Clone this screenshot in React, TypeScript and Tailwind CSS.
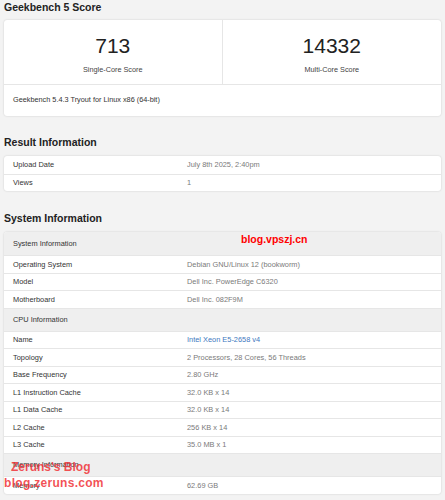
import React from "react";

type Row = { label: string; value: string; link?: boolean };
type Block = { header?: string; rows: Row[] };

const resultRows: Row[] = [
  { label: "Upload Date", value: "July 8th 2025, 2:40pm" },
  { label: "Views", value: "1" },
];

const systemBlocks: Block[] = [
  {
    header: "System Information",
    rows: [
      { label: "Operating System", value: "Debian GNU/Linux 12 (bookworm)" },
      { label: "Model", value: "Dell Inc. PowerEdge C6320" },
      { label: "Motherboard", value: "Dell Inc. 082F9M" },
    ],
  },
  {
    header: "CPU Information",
    rows: [
      { label: "Name", value: "Intel Xeon E5-2658 v4", link: true },
      { label: "Topology", value: "2 Processors, 28 Cores, 56 Threads" },
      { label: "Base Frequency", value: "2.80 GHz" },
      { label: "L1 Instruction Cache", value: "32.0 KB x 14" },
      { label: "L1 Data Cache", value: "32.0 KB x 14" },
      { label: "L2 Cache", value: "256 KB x 14" },
      { label: "L3 Cache", value: "35.0 MB x 1" },
    ],
  },
  {
    header: "Memory Information",
    rows: [{ label: "Memory", value: "62.69 GB" }],
  },
];

function SectionTitle({ children, className }: { children: string; className?: string }) {
  return (
    <h2 className={`h-[14px] text-[10.5px] font-bold leading-[14px] text-[#222] ${className ?? ""}`}>
      {children}
    </h2>
  );
}

function InfoRow({ row, first }: { row: Row; first: boolean }) {
  return (
    <div
      className={`grid h-[17.5px] grid-cols-[174px_1fr] items-center px-[9px] text-[7.4px] ${
        first ? "" : "border-t border-[#e6e6e6]"
      }`}
    >
      <span className="text-[#333]">{row.label}</span>
      <span className={row.link ? "text-[#3d78c0]" : "text-[#7a7a7a]"}>{row.value}</span>
    </div>
  );
}

function InfoTable({ blocks }: { blocks: Block[] }) {
  return (
    <div className="overflow-hidden rounded-[3px] bg-white shadow-[0_0_2px_rgba(0,0,0,0.18)]">
      {blocks.map((block, bi) => (
        <div key={bi}>
          {block.header && (
            <div
              className={`flex h-[23px] items-center bg-[#efefef] px-[9px] text-[7.4px] text-[#333] ${
                bi === 0 ? "" : "border-t border-[#e6e6e6]"
              }`}
            >
              {block.header}
            </div>
          )}
          {block.rows.map((row, ri) => (
            <InfoRow key={row.label} row={row} first={!block.header && ri === 0} />
          ))}
        </div>
      ))}
    </div>
  );
}

export default function App() {
  return (
    <div
      className="relative h-[500px] w-[445px] overflow-hidden bg-[#f3f3f3] px-[4px]"
      style={{ fontFamily: '"Liberation Sans", Arial, sans-serif' }}
    >
      <SectionTitle>Geekbench 5 Score</SectionTitle>

      <div className="mt-[6px] overflow-hidden rounded-[3px] bg-white shadow-[0_0_2px_rgba(0,0,0,0.18)]">
        <div className="grid h-[65px] grid-cols-2 border-b border-[#e6e6e6]">
          <div className="flex flex-col items-center border-r border-[#e6e6e6] pt-[13px]">
            <span className="text-[21px] leading-[26px] text-[#222]">713</span>
            <span className="mt-[6px] text-[7.3px] text-[#444]">Single-Core Score</span>
          </div>
          <div className="flex flex-col items-center pt-[13px]">
            <span className="text-[21px] leading-[26px] text-[#222]">14332</span>
            <span className="mt-[6px] text-[7.3px] text-[#444]">Multi-Core Score</span>
          </div>
        </div>
        <div className="flex h-[31px] items-center px-[9px] text-[7.3px] text-[#333]">
          Geekbench 5.4.3 Tryout for Linux x86 (64-bit)
        </div>
      </div>

      <SectionTitle className="mt-[19px]">Result Information</SectionTitle>
      <div className="mt-[7px]">
        <InfoTable blocks={[{ rows: resultRows }]} />
      </div>

      <SectionTitle className="mt-[20px]">System Information</SectionTitle>
      <div className="mt-[7px]">
        <InfoTable blocks={systemBlocks} />
      </div>

      <span className="absolute left-[241px] top-[232px] text-[10.5px] font-bold leading-[14px] text-[#ff0000]">
        blog.vpszj.cn
      </span>
      <div className="absolute left-[4px] top-[460px] flex flex-col text-[12px] font-semibold leading-[15.5px] text-[rgba(240,50,55,0.85)]">
        <span className="ml-[7px]">Zeruns's Blog</span>
        <span className="tracking-[0.3px]">blog.zeruns.com</span>
      </div>
    </div>
  );
}
